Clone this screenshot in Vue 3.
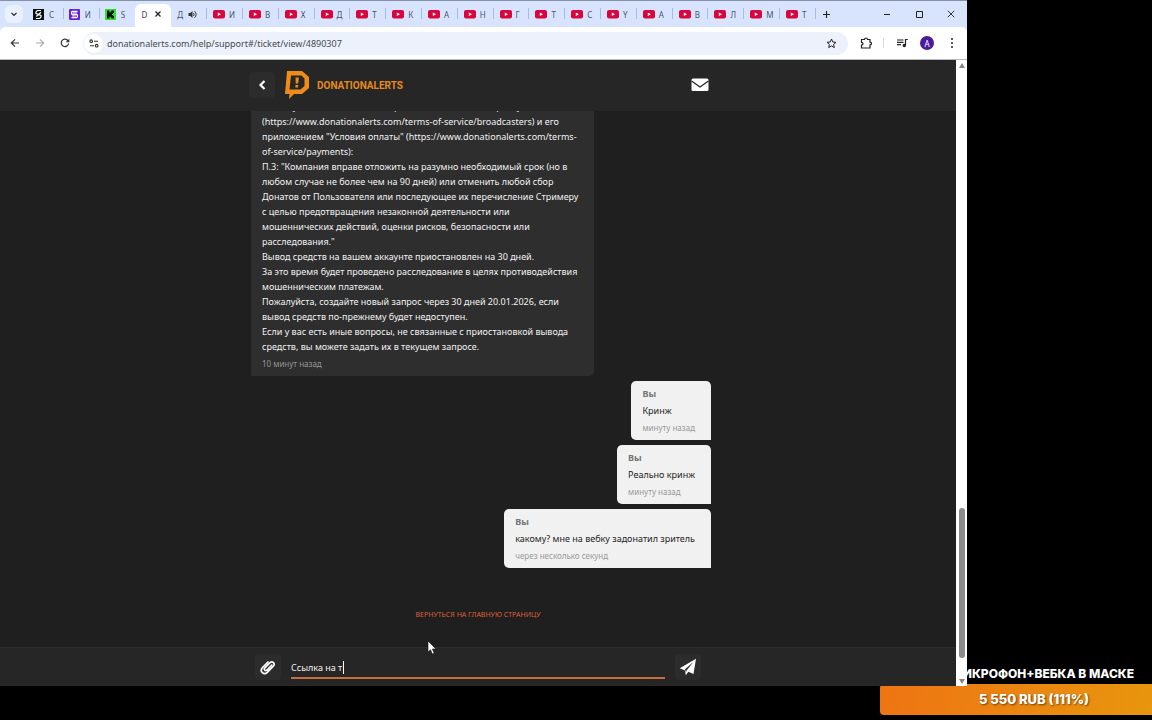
<script setup>
import { ref } from 'vue'

const address = ref('donationalerts.com/help/support#/ticket/view/4890307')
const draft = ref('Ссылка на т')

const tabs = [
  { kind: 'steam', title: 'С' },
  { kind: 'purple', title: 'И' },
  { kind: 'kick', title: 'S' },
  { kind: 'active', title: 'D' },
  { kind: 'sound', title: 'Д' },
  ...['И', 'В', 'Х', 'Д', 'Т', 'К', 'А', 'Н', 'Г', 'Т', 'С', 'Y', 'А', 'В', 'Л', 'М', 'Т'].map((title) => ({ kind: 'video', title })),
]

const answer = [
  'Вашему согласию о выплатах рекламы и оказании сервису',
  '(https://www.donationalerts.com/terms-of-service/broadcasters) и его',
  'приложением "Условия оплаты" (https://www.donationalerts.com/terms-',
  'of-service/payments):',
  'П.3: "Компания вправе отложить на разумно необходимый срок (но в',
  'любом случае не более чем на 90 дней) или отменить любой сбор',
  'Донатов от Пользователя или последующее их перечисление Стримеру',
  'с целью предотвращения незаконной деятельности или',
  'мошеннических действий, оценки рисков, безопасности или',
  'расследования."',
  'Вывод средств на вашем аккаунте приостановлен на 30 дней.',
  'За это время будет проведено расследование в целях противодействия',
  'мошенническим платежам.',
  'Пожалуйста, создайте новый запрос через 30 дней 20.01.2026, если',
  'вывод средств по-прежнему будет недоступен.',
  'Если у вас есть иные вопросы, не связанные с приостановкой вывода',
  'средств, вы можете задать их в текущем запросе.',
].join('\n')

const replies = [
  { text: 'Кринж', time: 'минуту назад' },
  { text: 'Реально кринж', time: 'минуту назад' },
  { text: 'какому? мне на вебку задонатил зритель', time: 'через несколько секунд' },
]
</script>

<template>
  <div class="stage">
    <section class="browser">
      <div class="tabstrip">
        <button class="tab-search" aria-label="Поиск вкладок">
          <svg width="8" height="8" viewBox="0 0 8 8"><path d="M1.5 2.8 4 5.3 6.500 2.8" fill="none" stroke="#222" stroke-width="1.2" /></svg>
        </button>
        <div class="tabs">
          <button v-for="(tab, i) in tabs" :key="i" class="tab" :class="tab.kind">
            <svg v-if="tab.kind === 'steam'" width="11" height="11" viewBox="0 0 11 11"><rect width="11" height="11" fill="#08110f" /><path d="M8 1.500H4.300L3 3v1.500l5 2V8L6.700 9.500H3M8 3.300 3.300 7.500" fill="none" stroke="#fff" stroke-width="1.200" /></svg>
            <svg v-else-if="tab.kind === 'purple'" width="11" height="11" viewBox="0 0 11 11"><rect width="11" height="11" rx="1" fill="#6a1fe0" /><path d="M8.500 2.500H3.500Q2.500 2.500 2.500 4t1 1.500h4Q8.500 5.500 8.500 7t-1 1.700H2.500" fill="none" stroke="#fff" stroke-width="1.300" /><path d="M4 4h4M3 7h4" stroke="#fff" stroke-width=".8" /></svg>
            <svg v-else-if="tab.kind === 'kick'" width="11" height="11" viewBox="0 0 11 11"><rect width="11" height="11" fill="#2be32b" /><path d="M2 1.500h2.500v2h1v-1h1v-1H9V4H8v1H7v1h1v1h1v2.500H6.500v-1h-1v-1h-1v2H2z" fill="#061006" /></svg>
            <svg v-else-if="tab.kind === 'video'" width="12" height="9" viewBox="0 0 12 9"><rect width="12" height="8.500" rx="2" fill="#d8063c" /><path d="m4.800 2.500 3.200 1.800-3.200 1.800z" fill="#fff" /></svg>
            <span class="tab-title">{{ tab.title }}</span>
            <svg v-if="tab.kind === 'active'" width="8" height="8" viewBox="0 0 8 8"><path d="m1.500 1.500 5 5m0-5-5 5" stroke="#222" stroke-width="1.300" /></svg>
            <svg v-if="tab.kind === 'sound'" width="9" height="9" viewBox="0 0 9 9"><path d="M.5 3h1.800L4.500 1v7L2.300 6H.5z" fill="#333" /><path d="M5.500 3q1.200 1.500 0 3M6.500 1.200q3.300 3.300 0 6.600" fill="none" stroke="#333" /></svg>
          </button>
        </div>
        <button class="new-tab" aria-label="Новая вкладка">
          <svg width="9" height="9" viewBox="0 0 9 9"><path d="M4.500 1v7M1 4.500h7" stroke="#222" stroke-width="1.100" /></svg>
        </button>
        <div class="window-buttons">
          <button aria-label="Свернуть"><svg width="8" height="8" viewBox="0 0 8 8"><path d="M1 4.500h6" stroke="#222" /></svg></button>
          <button aria-label="Развернуть"><svg width="8" height="8" viewBox="0 0 8 8"><path d="M1.500 1.500h6v6h-6z" fill="none" stroke="#222" /></svg></button>
          <button aria-label="Закрыть"><svg width="8" height="8" viewBox="0 0 8 8"><path d="m.8.8 6.400 6.400m0-6.400L.8 7.200" stroke="#222" stroke-width=".9" /></svg></button>
        </div>
      </div>

      <div class="toolbar">
        <div class="nav-buttons">
          <button aria-label="Назад"><svg width="10" height="10" viewBox="0 0 10 10"><path d="M9 5H1.500M5 1.300 1.300 5 5 8.700" fill="none" stroke="#333" stroke-width="1.200" /></svg></button>
          <button aria-label="Вперёд"><svg width="10" height="10" viewBox="0 0 10 10"><path d="M1 5h7.500M5 1.300 8.700 5 5 8.700" fill="none" stroke="#aaa" stroke-width="1.100" /></svg></button>
          <button aria-label="Обновить"><svg width="10" height="10" viewBox="0 0 10 10"><path d="M8.600 5.500A3.700 3.700 0 1 1 7.800 2.500L8.800 3.600" fill="none" stroke="#333" stroke-width="1.200" /><path d="M9.300.7v3.600H5.700z" fill="#333" /></svg></button>
        </div>
        <div class="address">
          <button class="site-info" aria-label="Сведения о сайте">
            <svg width="10" height="9" viewBox="0 0 10 9"><g fill="none" stroke="#333" stroke-width="1.100"><circle cx="2.200" cy="2.200" r="1.300" /><path d="M5 2.200h4M1 6.700h4" /><circle cx="7.700" cy="6.700" r="1.300" /></g></svg>
          </button>
          <input v-model="address" class="address-input" type="text" aria-label="Адрес" />
          <button aria-label="Добавить в закладки"><svg width="11" height="11" viewBox="0 0 11 11"><path d="m5.500 1 1.300 3 3.200.3-2.400 2.100.7 3.200-2.800-1.700-2.800 1.700.7-3.200L1 4.300 4.200 4z" fill="none" stroke="#222" /></svg></button>
        </div>
        <button class="extensions" aria-label="Расширения"><svg width="13" height="12" viewBox="0 0 13 12"><path d="M1.500 2.500h3q0-1.500 1.500-1.500t1.500 1.500h2.500v2.700q1.500 0 1.500 1.300T10 7.800V11H1.500V8q1.500 0 1.500-1.300T1.500 5.300z" fill="none" stroke="#222" stroke-width="1.200" /></svg></button>
        <span class="toolbar-divider"></span>
        <button class="media" aria-label="Управление медиа"><svg width="12" height="10" viewBox="0 0 12 10"><path d="M1 2h6.500M1 4.300h6.500M1 6.600h4M9.500 7.300V1.500h2.200" fill="none" stroke="#222" stroke-width="1.200" /><circle cx="8.300" cy="7.500" r="1.700" fill="#222" /></svg></button>
        <button class="avatar" aria-label="Профиль">A</button>
        <button class="menu" aria-label="Меню"><svg width="4" height="12" viewBox="0 0 4 12" fill="#222"><circle cx="2" cy="2" r="1" /><circle cx="2" cy="6" r="1" /><circle cx="2" cy="10" r="1" /></svg></button>
      </div>

      <div class="viewport">
        <div class="page">
          <header class="topbar">
            <div class="column topbar-row">
              <button class="square" aria-label="Вернуться"><svg width="9" height="12" viewBox="0 0 9 12"><path d="M6.500 2 2.500 6l4 4" fill="none" stroke="#fff" stroke-width="2.200" /></svg></button>
              <a class="brand" href="#">
                <svg width="26" height="30" viewBox="0 0 26 30"><path fill="#ee8c17" fill-rule="evenodd" d="M3 1h15l7 6v11l-7 6h-8l-5 5 .5-5H1zM7 5.500 5.500 19.500h11L20.500 16V8.500L17.500 5.500z" /><path d="M11.500 7.500h3.400l-.7 6h-2.500zM11.500 15h2.700l-.2 2.600h-2.700z" fill="#ee8c17" /></svg>
                <span>DONATIONALERTS</span>
              </a>
              <button class="mail" aria-label="Сообщения"><svg width="18" height="14" viewBox="0 0 18 14"><rect x=".5" y=".5" width="17" height="12.500" rx="1.500" fill="#fff" /><path d="m.5 3 8.500 6 8.500-6" fill="none" stroke="#262626" stroke-width="1.300" /></svg></button>
            </div>
          </header>

          <main class="chat">
            <div class="column thread">
              <article class="bubble support">
                <p class="text">{{ answer }}</p>
                <time>10 минут назад</time>
              </article>
              <article v-for="reply in replies" :key="reply.text" class="bubble own">
                <strong>Вы</strong>
                <p class="text">{{ reply.text }}</p>
                <time>{{ reply.time }}</time>
              </article>
            </div>
            <a class="home-link" href="#">ВЕРНУТЬСЯ НА ГЛАВНУЮ СТРАНИЦУ</a>
          </main>

          <footer class="composer">
            <form class="column composer-row" @submit.prevent>
              <button class="square" type="button" aria-label="Прикрепить файл"><svg width="18" height="18" viewBox="0 0 18 18"><path d="M12.800 7.200 8 12q-1.300 1.100-2.300.1t.1-2.300l5-5q2-1.800 3.600-.2t-.1 3.700l-6 6q-2.700 2.500-5 .3T3.500 9.500L9 4" fill="none" stroke="#fff" stroke-width="1.700" stroke-linecap="round" /></svg></button>
              <div class="field">
                <input v-model="draft" type="text" aria-label="Сообщение" />
                <span class="caret"></span>
              </div>
              <button class="square" type="submit" aria-label="Отправить"><svg width="18" height="18" viewBox="0 0 18 18"><path d="M17 .7 14.500 16 9.300 13.700 6.800 17.300 6 12.400.8 10.200zM14.500 3.800 6 11.300 7 14.200 7.600 12.500z" fill="#fff" fill-rule="evenodd" /></svg></button>
            </form>
          </footer>
        </div>
        <div class="scrollbar">
          <svg width="8" height="6" viewBox="0 0 8 6"><path d="M4 0 7 5H1z" fill="#858585" /></svg>
          <span class="thumb"></span>
          <svg width="8" height="6" viewBox="0 0 8 6"><path d="M1 0h6L4 5z" fill="#858585" /></svg>
        </div>
      </div>
    </section>

    <div class="goal-title">МИКРОФОН+ВЕБКА В МАСКЕ</div>
    <div class="goal-bar">5 550 RUB (111%)</div>
    <svg class="pointer" width="10" height="15" viewBox="0 0 10 15"><path d="M1 1v11l2.500-2.300L5.300 14l1.900-.8L5.400 9H9z" fill="#fff" stroke="#111" stroke-width=".6" /></svg>
  </div>
</template>

<style>
body { background: #000; }
</style>

<style scoped>
.stage {
  position: relative;
  height: 100vh;
  overflow: hidden;
  background: #000;
  font-family: "Noto Sans", "Open Sans", sans-serif;
  font-size: 9px;
  line-height: 15px;
}
button { padding: 0; border: 0; background: none; font: inherit; color: inherit; display: flex; align-items: center; justify-content: center; }
input { min-width: 0; padding: 0; border: 0; outline: 0; background: none; font: inherit; color: inherit; }
svg { display: block; flex: none; }
.browser {
  position: relative;
  z-index: 1;
  display: flex;
  flex-direction: column;
  width: calc(100% - 185px);
  height: calc(100vh - 34px);
  background: #d8e4fd;
}
.tabstrip { display: flex; align-items: flex-end; height: 27px; flex: none; box-sizing: border-box; border-top: 1px solid #8691a8; }
.tab-search { width: 18px; height: 18px; margin: 0 5px 4px; border-radius: 6px; background: #e9f0fe; }
.tabs { display: flex; flex: 0 1 788px; }
.tab { position: relative; flex: 1 1 30px; min-width: 0; height: 23px; padding: 0 0 3px 5px; box-sizing: border-box; justify-content: flex-start; gap: 5px; color: #4a5470; font-size: 8px; border-radius: 6px 6px 0 0; }
.tab::after { content: ""; position: absolute; right: 0; top: 4px; width: 1px; height: 11px; background: #a9bbdf; }
.tab.active::after, .tab.kick::after { display: none; }
.tab-title { text-align: left; }
.video { padding-left: 6px; gap: 4px; }
.active { background: #fff; padding-left: 6px; gap: 7px; color: #444; }
.sound { padding-left: 6px; }
.new-tab { width: 20px; height: 23px; padding-bottom: 3px; }
.window-buttons { display: flex; margin-left: auto; }
.window-buttons button { width: 32px; height: 24px; padding-bottom: 3px; }
.toolbar { display: flex; align-items: center; height: 33px; flex: none; box-sizing: border-box; border-bottom: 1px solid #b9bbc0; border-radius: 5px 5px 0 0; background: #fff; }
.nav-buttons { display: flex; gap: 15px; padding: 0 13px 0 10px; }
.address { display: flex; align-items: center; flex: 1; height: 23px; box-sizing: border-box; padding: 0 11px 0 1px; border-radius: 12px; background: #ecf1fb; }
.site-info { width: 19px; height: 19px; border-radius: 10px; background: #fff; }
.address-input { flex: 1; margin-left: 4px; font-size: 9px; color: #454a52; }
.extensions { margin-left: 12px; }
.toolbar-divider { width: 1px; height: 10px; margin: 0 12px 0 10px; background: #cfdaf0; }
.avatar { width: 14px; height: 14px; margin: 0 16px 0 12px; border-radius: 50%; background: #4a1d9c; color: #fff; font-size: 8px; }
.menu { margin-right: 13px; }
.viewport { display: flex; flex: 1; min-height: 0; }
.page { display: flex; flex-direction: column; flex: 1; min-width: 0; background: #1f1f1f; color: #f2f2f2; }
.column { width: 100%; max-width: 470px; margin: 0 auto; box-sizing: border-box; }
.topbar { flex: none; background: #262626; }
.topbar-row { display: flex; align-items: center; height: 51px; padding: 0 4px 1px 6px; }
.square { flex: none; width: 26px; height: 26px; border-radius: 4px; background: #2c2c2c; }
.brand { display: flex; align-items: center; gap: 7px; margin-left: 9px; color: #e58a1f; font-size: 10px; font-weight: 700; font-family: Roboto, sans-serif; text-decoration: none; }
.mail { margin-left: auto; }
.chat { display: flex; flex-direction: column; justify-content: flex-end; flex: 1; min-height: 0; overflow: hidden; }
.thread { display: flex; flex-direction: column; gap: 5px; padding: 0 2px 0 8px; }
.bubble { display: flex; flex-direction: column; gap: 2px; box-sizing: border-box; padding: 5px 11px; }
.bubble time { font-size: 8px; }
.text { margin: 0; white-space: pre-wrap; }
.support { align-self: flex-start; width: 343px; border-radius: 5px 5px 5px 0; background: #2e2e2e; }
.support .text { white-space: pre; }
.support time { color: #969696; }
.own { align-self: flex-end; padding: 5px 16px 5px 11px; border-radius: 5px 5px 0 5px; background: #f1f1f1; color: #1d1d1d; }
.own strong { color: #757575; }
.own time { color: #999; }
.home-link { align-self: center; margin: 39px 0 25px; color: #dc5f39; font-size: 7px; text-decoration: none; }
.composer { flex: none; border-top: 1px solid #2d2d2d; background: #262626; }
.composer-row { display: flex; align-items: center; gap: 10px; height: 38px; padding: 0 12px; }
.field { position: relative; display: flex; flex: 1; align-items: center; height: 20px; padding-top: 2px; border-bottom: 2px solid #c86f3e; }
.field input { flex: 1; }
.caret { position: absolute; left: 52px; top: 6px; width: 1px; height: 13px; background: #fff; }
.scrollbar { display: flex; flex-direction: column; align-items: center; flex: none; width: 11px; box-sizing: border-box; padding: 3px 0 1px; background: #fff; }
.thumb { width: 6px; height: 150px; margin: auto 0 21px; border-radius: 3px; background: #8b8b8b; }
.goal-title, .goal-bar { position: absolute; color: #fff; font-family: Inter, Roboto, sans-serif; font-weight: 800; white-space: nowrap; }
.goal-title { right: 18px; bottom: 38px; font-size: 12px; line-height: 16px; }
.goal-bar { right: 0; bottom: 5px; left: calc(100% - 272px); border-radius: 4px 0 0 4px; background: linear-gradient(100deg, #ee7413, #e8960e); font-size: 13px; line-height: 31px; text-align: center; text-indent: 36px; text-shadow: 1px 1px 2px #0008; }
.pointer { position: absolute; z-index: 2; left: 427px; top: 640px; }
</style>
